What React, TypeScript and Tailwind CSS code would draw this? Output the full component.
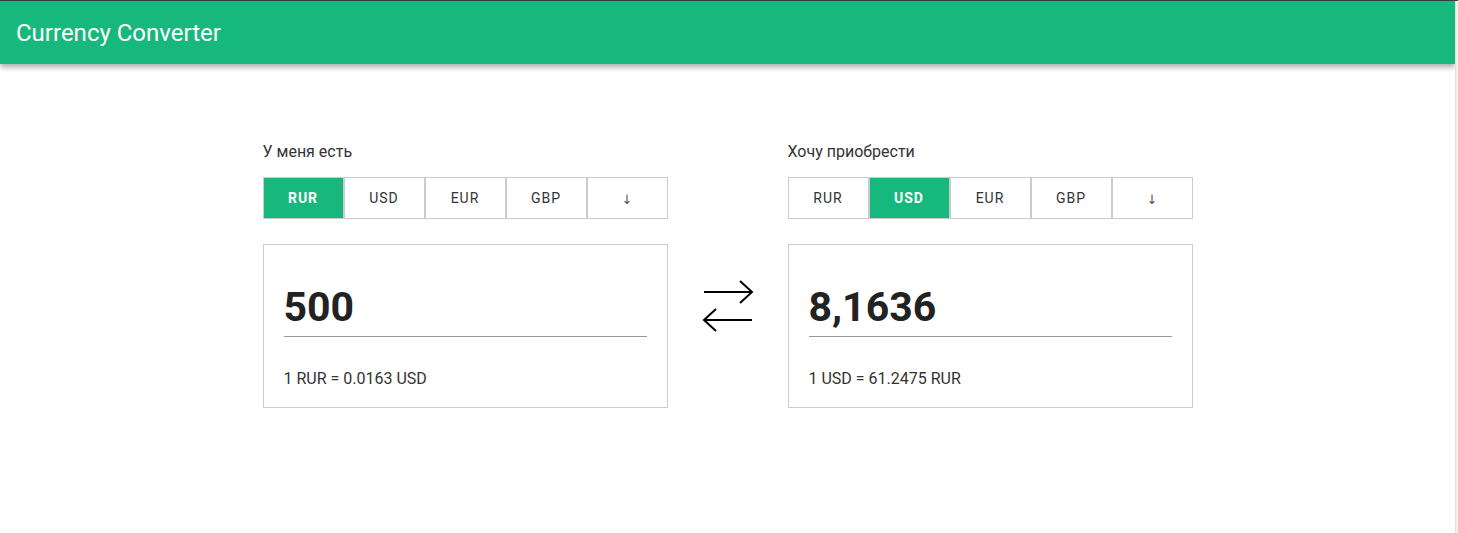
import { useState } from 'react';

const currencies = ['RUR', 'USD', 'EUR', 'GBP'];

function classNames(...classes: (string | false)[]) {
  return classes.filter(Boolean).join(' ');
}

function CurrencyPanel({
  label,
  active,
  value,
  rate,
}: {
  label: string;
  active: string;
  value: string;
  rate: string;
}) {
  const [amount, setAmount] = useState(value);

  return (
    <div className="flex w-[405px] flex-col">
      <p className="mb-[13px] text-base leading-6 text-[#333]">{label}</p>
      <div className="flex h-[42px]">
        {currencies.map((c) => (
          <button
            key={c}
            className={classNames(
              c === active ? 'bg-[#17b87e] font-bold text-white' : 'bg-white text-[#333]',
              'flex w-[81px] items-center justify-center border border-[#cccccc] text-[14px] tracking-[1px]',
            )}
          >
            {c}
          </button>
        ))}
        <button className="flex w-[81px] items-center justify-center border border-[#cccccc] pt-[3px] font-['DejaVu_Sans',sans-serif] text-[13px] text-[#555]">
          ↓
        </button>
      </div>
      <div className="mt-[25px] flex h-[164px] flex-col border border-[#cccccc] px-5 pt-[35px]">
        <input
          value={amount}
          onChange={(e) => setAmount(e.target.value)}
          className="h-[57px] w-full border-b border-[#999] text-[41px] font-bold text-[#222] outline-none"
        />
        <p className="mt-[30px] text-base leading-6 text-[#333]">{rate}</p>
      </div>
    </div>
  );
}

export default function App() {
  return (
    <div className="flex h-[533px] border-t border-[#3c4046] bg-white font-['Roboto',sans-serif]">
      <div className="flex flex-1 flex-col">
        {/* header */}
        <header className="flex h-[63px] items-center bg-[#17b87e] px-4 shadow-[0_3px_6px_rgba(0,0,0,0.35)]">
          <h1 className="text-2xl leading-8 text-white">Currency Converter</h1>
        </header>
        <main className="flex justify-center pt-[76px]">
          <CurrencyPanel label="У меня есть" active="RUR" value="500" rate="1 RUR = 0.0163 USD" />
          <div className="flex w-[120px] justify-center pt-[138px]">
            <svg width="56" height="56" viewBox="0 0 56 56" fill="none" stroke="#000" strokeWidth="2">
              <path d="M4 14h48M40 3l12 11-12 11" />
              <path d="M52 42H4M16 31 4 42l12 11" />
            </svg>
          </div>
          <CurrencyPanel label="Хочу приобрести" active="USD" value="8,1636" rate="1 USD = 61.2475 RUR" />
        </main>
      </div>
      <div className="w-[3px] border-l border-[#e2e2e2] bg-[#f1f1f1]" />
    </div>
  );
}
